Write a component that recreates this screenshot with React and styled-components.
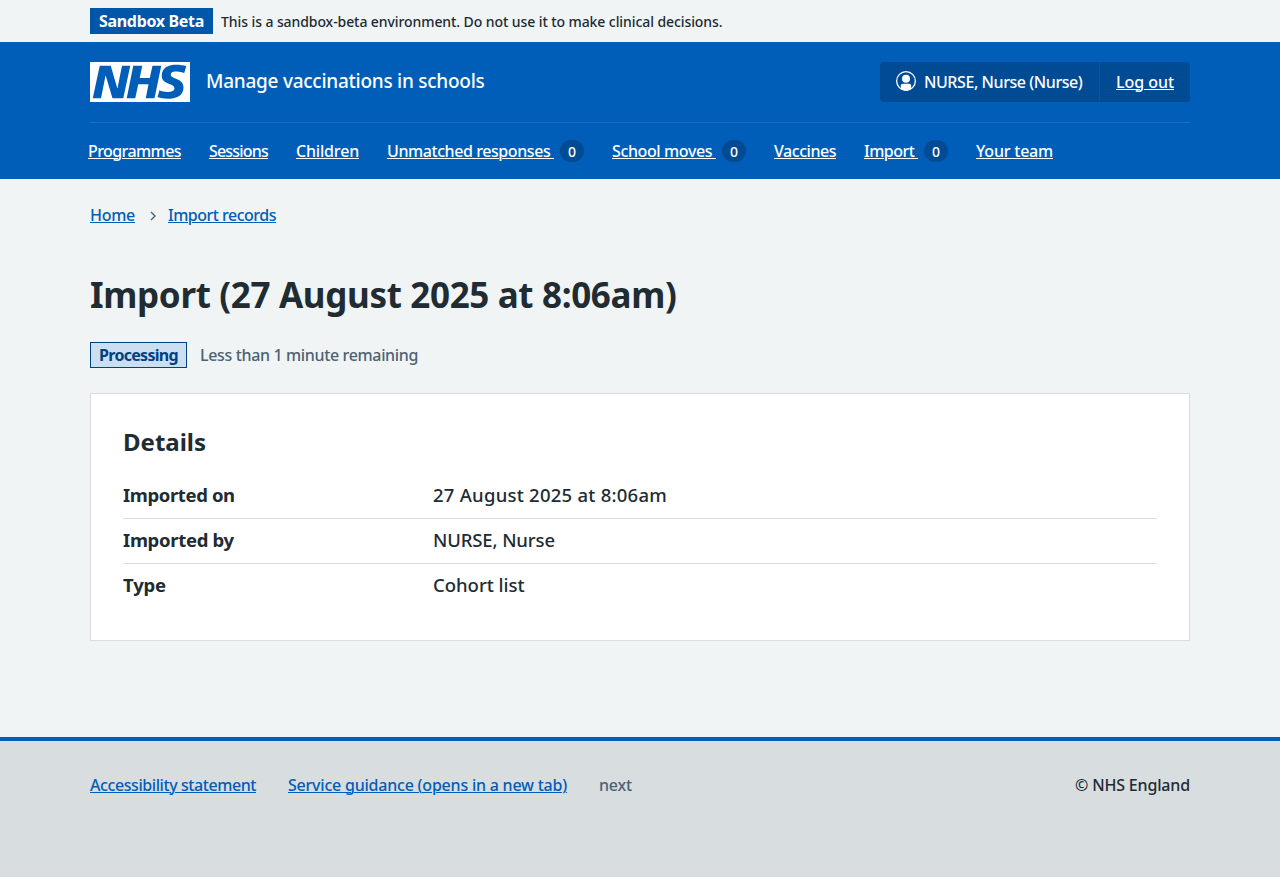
import React from "react";
import styled, { createGlobalStyle, css } from "styled-components";

const color = {
  blue: "#005eb8",
  blueDark: "#004b93",
  text: "#212b32",
  secondary: "#4c6272",
  page: "#f0f4f5",
  border: "#d8dde0",
};

const GlobalStyle = createGlobalStyle`
  *, *::before, *::after { box-sizing: border-box; }
  html { background: ${color.border}; }
  body {
    margin: 0;
    background: ${color.page};
    color: ${color.text};
    font-family: "Noto Sans", "Liberation Sans", sans-serif;
    font-size: 16px;
    font-weight: 500;
    line-height: 24px;
  }
  h1, h2, p, ul, ol, dl, dd { margin: 0; padding: 0; }
  ul, ol { list-style: none; }
`;

const tracked = css`
  letter-spacing: ${(p) => p.$track || 0}em;
  white-space: pre;
`;

const Page = styled.div`
  display: flex;
  flex-direction: column;
  min-height: 877px;
`;

const Container = styled.div`
  width: 1100px;
  margin: 0 auto;
`;

const Link = styled.a`
  ${tracked}
  color: ${(p) => (p.$light ? "#fff" : color.blue)};
  text-decoration: underline;
  text-decoration-thickness: 1px;
  text-underline-offset: 1px;
  text-decoration-skip-ink: auto;
`;

const EnvironmentBanner = styled(Container)`
  display: flex;
  align-items: baseline;
  gap: 8px;
  height: 42px;
  padding-top: 8px;
`;

const EnvironmentTag = styled.strong`
  ${tracked}
  width: 123px;
  height: 26px;
  padding: 1px 9px;
  background: #0056a8;
  color: #fff;
  font-weight: 700;
`;

const EnvironmentText = styled.p`
  ${tracked}
  font-size: 14px;
`;

const Header = styled.header`
  height: 137px;
  background: ${color.blue};
  color: #fff;
`;

const HeaderTop = styled(Container)`
  display: flex;
  align-items: center;
  height: 81px;
  border-bottom: 1px solid #1f6bb9;
`;

const Logo = styled.svg`
  display: block;
  width: 100px;
  height: 40px;
  color: #fff;
`;

const ServiceName = styled.span`
  ${tracked}
  margin: 0 auto 2px 16px;
  font-size: 19px;
  line-height: 28px;
`;

const Account = styled.div`
  display: flex;
  height: 40px;
  border-radius: 4px;
  background: ${color.blueDark};
  overflow: hidden;
`;

const AccountItem = styled.div`
  display: flex;
  align-items: center;
  width: ${(p) => p.$width}px;
  padding-left: 16px;

  & + & {
    padding-left: 16px;
    border-left: 1px solid #0057aa;
  }
`;

const AccountIcon = styled.svg`
  width: 20px;
  height: 20px;
  margin: 0 8px 2px 0;
`;

const AccountName = styled.span`
  ${tracked}
`;

const Navigation = styled.ul`
  display: flex;
  align-items: center;
  gap: 28px;
  width: 1104px;
  height: 56px;
  margin: 0 auto;
`;

const NavItem = styled.li`
  display: flex;
  align-items: center;
  gap: 6px;
  width: ${(p) => p.$width}px;
  white-space: nowrap;
`;

const NavLink = styled(Link)`
  flex: 1;
`;

const Count = styled.span`
  width: 24px;
  height: 22px;
  border-radius: 12px;
  background: ${color.blueDark};
  font-size: 14px;
  line-height: 23px;
  text-align: center;
`;

const Main = styled(Container)`
  flex: 1;
`;

const Breadcrumb = styled.ol`
  display: flex;
  padding-top: 24px;
`;

const Chevron = styled.svg`
  width: 6px;
  height: 10px;
  margin: 8px 12px 0 15px;
`;

const Title = styled.h1`
  ${tracked}
  margin-top: 46px;
  font-size: 35px;
  font-weight: 700;
  line-height: 44px;
`;

const Status = styled.div`
  display: flex;
  gap: 13px;
  margin-top: 25px;
`;

const Tag = styled.strong`
  ${tracked}
  width: 97px;
  height: 26px;
  padding-left: 8px;
  border: 1px solid #004281;
  background: #ccdff1;
  color: #004281;
  font-weight: 700;
`;

const Hint = styled.span`
  ${tracked}
  color: ${color.secondary};
  line-height: 26px;
`;

const Card = styled.section`
  height: 248px;
  margin-top: 25px;
  padding: 32px;
  border: 1px solid ${color.border};
  background: #fff;
`;

const CardTitle = styled.h2`
  ${tracked}
  font-size: 24px;
  font-weight: 700;
  line-height: 32px;
`;

const SummaryList = styled.dl`
  margin-top: 16px;
  font-size: 18.5px;
  line-height: 28px;
`;

const SummaryRow = styled.div`
  display: grid;
  grid-template-columns: 310px 1fr;
  height: 45px;
  padding-top: 7px;
  border-bottom: 1px solid ${color.border};

  &:last-child { border-bottom: 0; }
`;

const SummaryKey = styled.dt`
  ${tracked}
  font-weight: 700;
`;

const SummaryValue = styled.dd`
  ${tracked}
`;

const Footer = styled.footer`
  height: 140px;
  border-top: 4px solid ${color.blue};
  background: ${color.border};
`;

const FooterRow = styled(Container)`
  display: flex;
  gap: 32px;
  padding-top: 32px;
`;

const FooterNote = styled.span`
  ${tracked}
  color: ${color.secondary};
`;

const Copyright = styled.p`
  ${tracked}
  margin-left: auto;
`;

const navItems = [
  { label: "Programmes", width: 93, track: -0.0361 },
  { label: "Sessions", width: 59, track: -0.0503 },
  { label: "Children", width: 63, track: -0.0111 },
  { label: "Unmatched responses ", width: 197, track: -0.0264, count: 0 },
  { label: "School moves ", width: 134, track: -0.0235, count: 0 },
  { label: "Vaccines", width: 62, track: -0.0289 },
  { label: "Import ", width: 84, track: -0.0319, count: 0 },
  { label: "Your team", width: 77, track: -0.0132 },
];

const details = [
  { key: "Imported on", keyTrack: -0.0205, value: "27 August 2025 at 8:06am", track: 0.0132 },
  { key: "Imported by", keyTrack: -0.0165, value: "NURSE, Nurse", track: -0.007 },
  { key: "Type", keyTrack: -0.0085, value: "Cohort list", track: -0.001 },
];

export default function App() {
  return (
    <Page>
      <GlobalStyle />
      <EnvironmentBanner>
        <EnvironmentTag $track={-0.02}>Sandbox Beta</EnvironmentTag>
        <EnvironmentText $track={-0.006}>
          This is a sandbox-beta environment. Do not use it to make clinical decisions.
        </EnvironmentText>
      </EnvironmentBanner>

      <Header>
        <HeaderTop>
          <Logo viewBox="0 0 200 80" role="img" aria-label="NHS">
            <path
              fill="currentColor"
              d="M200 0v80H0V0h200Zm-27.5 5.5c-14.5 0-29 5-29 22 0 10.2 7.7 13.5 14.7 16.3l.7.3c5.4 2 10.1 3.9 10.1 8.4 0 6.5-8.5 7.5-14 7.5s-12.5-1.5-16-3.5L135 70c5.5 2 13.5 3.5 20 3.5 15.5 0 32-4.5 32-22.5 0-19.5-25.5-16.5-25.5-25.5 0-5.5 5.5-6.5 12.5-6.5a35 35 0 0 1 14.5 3l4-13.5c-4.5-2-12-3-20-3Zm-131 2h-22l-14 65H22l9-45h.5l13.5 45h21.5l14-65H64l-9 45h-.5l-13-45Zm63 0h-18l-13 65h17l6-28H117l-5.5 28H129l13.5-65H125L119.5 32h-20l5-24.5Z"
            />
          </Logo>
          <ServiceName $track={-0.0137}>Manage vaccinations in schools</ServiceName>
          <Account>
            <AccountItem $width={219}>
              <AccountIcon viewBox="0 0 20 20" fill="#fff" aria-hidden="true">
                <circle cx="10" cy="10" r="9.35" fill="none" stroke="#fff" strokeWidth="1.3" />
                <circle cx="10" cy="7.7" r="4" />
                <path d="M4.8 18v-3.3c0-1.2.8-2 2-2h6.4c1.2 0 2 .8 2 2V18a9.6 9.6 0 0 1-10.4 0Z" />
              </AccountIcon>
              <AccountName $track={-0.027}>NURSE, Nurse (Nurse)</AccountName>
            </AccountItem>
            <AccountItem $width={91}>
              <Link $light $track={-0.003}>Log out</Link>
            </AccountItem>
          </Account>
        </HeaderTop>
        <Navigation>
          {navItems.map((item) => (
            <NavItem key={item.label} $width={item.width}>
              <NavLink $light $track={item.track}>{item.label}</NavLink>
              {item.count !== undefined && <Count>{item.count}</Count>}
            </NavItem>
          ))}
        </Navigation>
      </Header>

      <Main as="main">
        <Breadcrumb>
          <li><Link $track={-0.0169}>Home</Link></li>
          <Chevron viewBox="0 0 6 10" aria-hidden="true">
            <path d="M1 1l4 4-4 4" fill="none" stroke="#4c6272" strokeWidth="1.4" />
          </Chevron>
          <li><Link $track={-0.0311}>Import records</Link></li>
        </Breadcrumb>

        <Title $track={-0.0097}>Import (27 August 2025 at 8:06am)</Title>

        <Status>
          <Tag $track={-0.0434}>Processing</Tag>
          <Hint $track={-0.0219}>Less than 1 minute remaining</Hint>
        </Status>

        <Card>
          <CardTitle $track={-0.0004}>Details</CardTitle>
          <SummaryList>
            {details.map((row) => (
              <SummaryRow key={row.key}>
                <SummaryKey $track={row.keyTrack}>{row.key}</SummaryKey>
                <SummaryValue $track={row.track}>{row.value}</SummaryValue>
              </SummaryRow>
            ))}
          </SummaryList>
        </Card>
      </Main>

      <Footer>
        <FooterRow>
          <Link $track={-0.0264}>Accessibility statement</Link>
          <Link $track={-0.0137}>Service guidance (opens in a new tab)</Link>
          <FooterNote $track={-0.0111}>next</FooterNote>
          <Copyright $track={-0.0101}>© NHS England</Copyright>
        </FooterRow>
      </Footer>
    </Page>
  );
}
